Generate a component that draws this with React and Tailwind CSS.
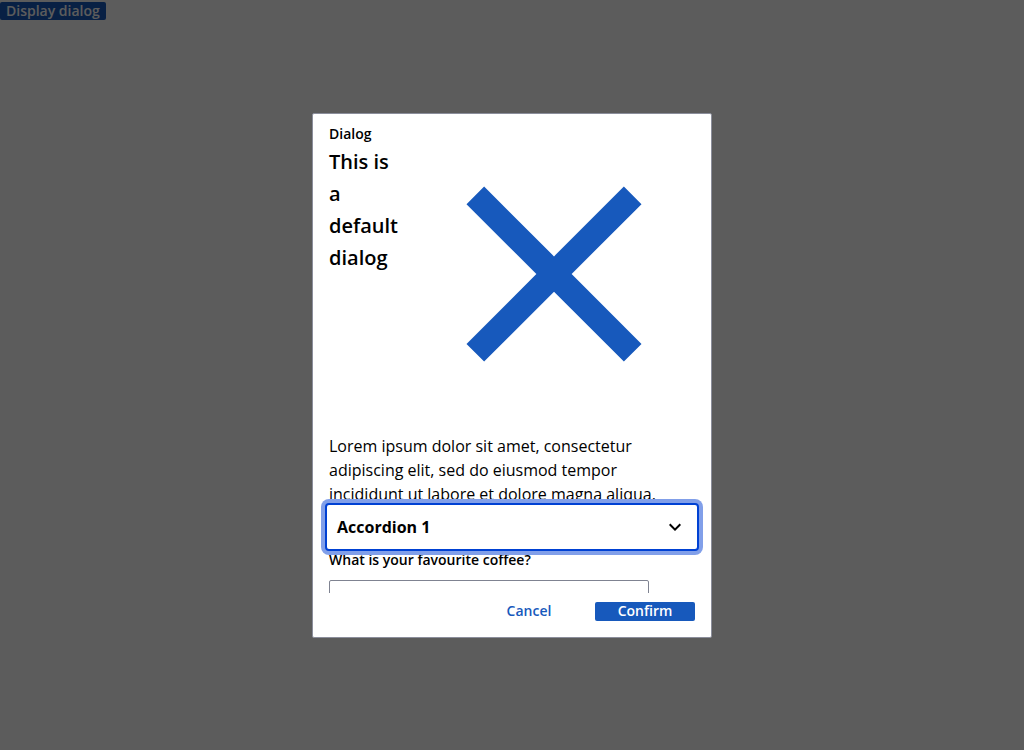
import React, { useState } from "react";

function CloseIcon() {
  return (
    <svg viewBox="0 0 24 24" fill="currentColor" className="size-full" aria-hidden="true">
      <path d="M19 6.41 17.59 5 12 10.59 6.41 5 5 6.41 10.59 12 5 17.59 6.41 19 12 13.41 17.59 19 19 17.59 13.41 12z" />
    </svg>
  );
}

function ChevronIcon() {
  return (
    <svg viewBox="0 0 24 24" fill="currentColor" className="size-6 shrink-0" aria-hidden="true">
      <path d="M7.41 8.59 12 13.17l4.59-4.58L18 10l-6 6-6-6z" />
    </svg>
  );
}

function Dialog({ onClose }) {
  return (
    <div className="fixed inset-0 flex items-center justify-center bg-black/64">
      <div
        role="dialog"
        aria-modal="true"
        aria-labelledby="dialog-label dialog-title"
        className="flex max-h-[70vh] w-full max-w-[400px] flex-col rounded-xs border border-[#8b8e9b] bg-white"
      >
        <div className="flex shrink-0 px-4 pt-2.5">
          <div className="min-w-0 flex-1">
            <p id="dialog-label" className="text-sm font-semibold">Dialog</p>
            <h2 id="dialog-title" className="mt-0.5 text-xl/8 font-semibold">
              This is a default dialog
            </h2>
          </div>
          <button
            type="button"
            aria-label="Close dialog"
            onClick={onClose}
            className="-mr-[9px] size-[300px] shrink-0 text-[#1759bc]"
          >
            <CloseIcon />
          </button>
        </div>

        <div className="min-h-0 flex-1 overflow-y-auto px-4 pt-2.5 [scrollbar-width:none]">
          <p className="text-base/6">
            Lorem ipsum dolor sit amet, consectetur adipiscing elit, sed do eiusmod tempor
            incididunt ut labore et dolore magna aliqua.
          </p>
          <button
            type="button"
            aria-expanded="false"
            className="relative -mx-1 -mt-[3px] flex h-12 w-[calc(100%+8px)] items-center justify-between rounded-sm border-2 border-[#0041d3] bg-white px-2.5 text-base/6 font-bold ring-4 ring-[#819fe9] outline-none"
          >
            Accordion 1
            <ChevronIcon />
          </button>
          <label htmlFor="coffee" className="block text-sm/[18px] font-semibold">
            What is your favourite coffee?
          </label>
          <input
            id="coffee"
            type="text"
            className="mt-[11px] block h-12 w-80 max-w-full rounded-xs border border-[#7f8391] px-4"
          />
        </div>

        <div className="flex shrink-0 justify-end gap-4 px-4 pt-[9px] pb-4 text-sm/[18px] font-semibold">
          <button type="button" onClick={onClose} className="w-[100px] rounded-xs pb-px text-[#1759bc]">
            Cancel
          </button>
          <button type="button" onClick={onClose} className="w-[100px] rounded-xs bg-[#1759bc] pb-px text-white">
            Confirm
          </button>
        </div>
      </div>
    </div>
  );
}

export default function App() {
  const [open, setOpen] = useState(true);
  return (
    <main className="min-h-screen bg-white pt-0.5 font-['Open_Sans',sans-serif] text-black">
      <button
        type="button"
        onClick={() => setOpen(true)}
        className="block rounded-xs bg-[#1759bc] px-1.5 text-sm/[18px] font-semibold text-white"
      >
        Display dialog
      </button>
      {open && <Dialog onClose={() => setOpen(false)} />}
    </main>
  );
}
